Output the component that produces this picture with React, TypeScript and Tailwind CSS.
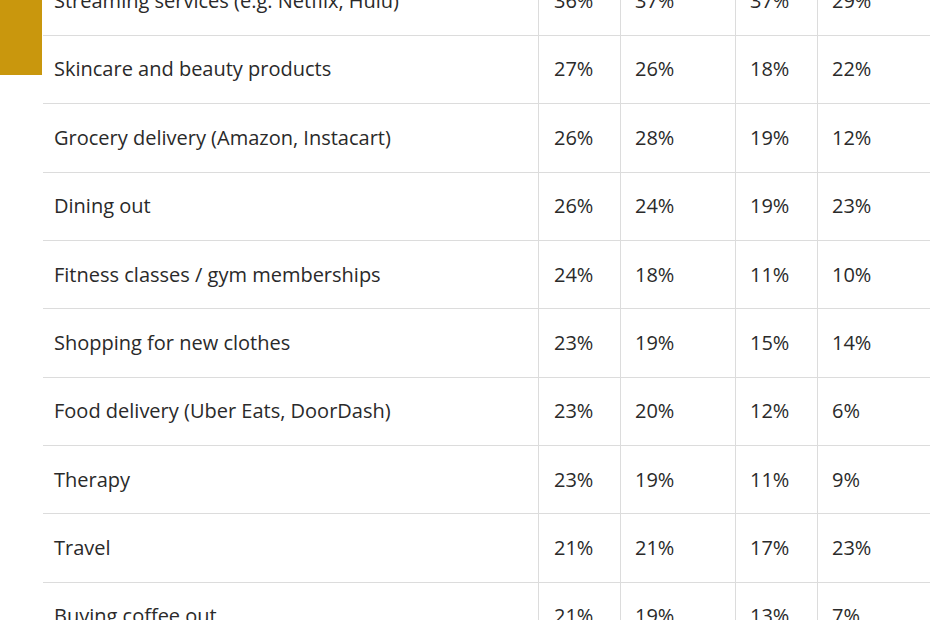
import React from "react";

const rows: [string, string, string, string, string][] = [
  ["Streaming services (e.g. Netflix, Hulu)", "36%", "37%", "37%", "29%"],
  ["Skincare and beauty products", "27%", "26%", "18%", "22%"],
  ["Grocery delivery (Amazon, Instacart)", "26%", "28%", "19%", "12%"],
  ["Dining out", "26%", "24%", "19%", "23%"],
  ["Fitness classes / gym memberships", "24%", "18%", "11%", "10%"],
  ["Shopping for new clothes", "23%", "19%", "15%", "14%"],
  ["Food delivery (Uber Eats, DoorDash)", "23%", "20%", "12%", "6%"],
  ["Therapy", "23%", "19%", "11%", "9%"],
  ["Travel", "21%", "21%", "17%", "23%"],
  ["Buying coffee out", "21%", "19%", "13%", "7%"],
];

export default function App() {
  return (
    <div
      className="w-[930px] h-[620px] overflow-hidden bg-white flex"
      style={{ fontFamily: '"Open Sans", "Noto Sans", sans-serif' }}
    >
      <div className="w-[43px] shrink-0">
        <div className="w-[42px] h-[75px] bg-[#c9970d]" />
      </div>
      <div className="flex-1 flex flex-col mt-[-32.6px]">
        {rows.map((r, i) => (
          <div
            key={i}
            className="flex h-[68.375px] shrink-0 border-b border-[#dcdcdc] text-[20px] text-[#2a2a2a]"
          >
            <div className="w-[495px] flex items-center pl-[11px]">{r[0]}</div>
            <div className="w-[82px] flex items-center pl-[15px] border-l border-[#dcdcdc]">{r[1]}</div>
            <div className="w-[115px] flex items-center pl-[14px] border-l border-[#dcdcdc]">{r[2]}</div>
            <div className="w-[82px] flex items-center pl-[14px] border-l border-[#dcdcdc]">{r[3]}</div>
            <div className="flex-1 flex items-center pl-[14px] border-l border-[#dcdcdc]">{r[4]}</div>
          </div>
        ))}
      </div>
    </div>
  );
}
